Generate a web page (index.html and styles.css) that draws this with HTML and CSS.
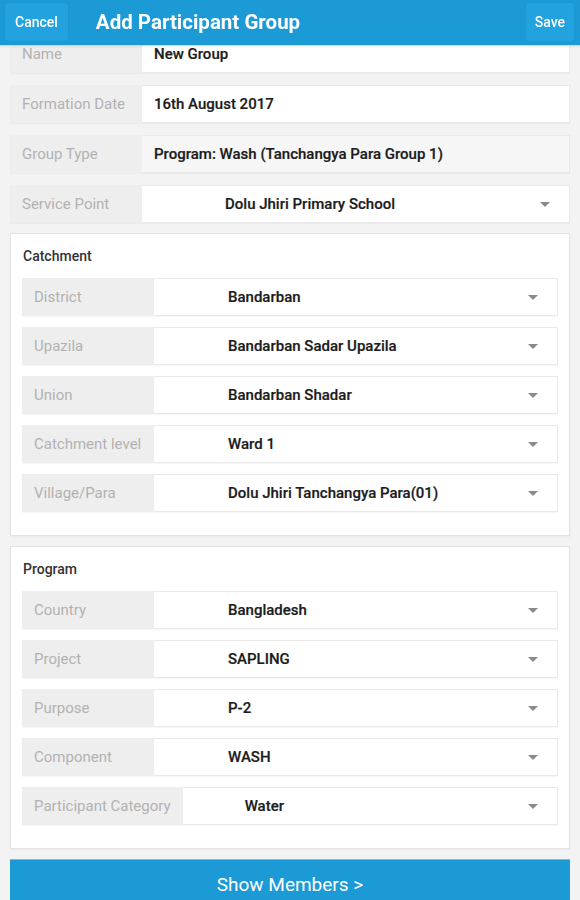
FILE: index.html
```html
<!DOCTYPE html>
<html>
<head>
<meta charset="utf-8">
<link rel="stylesheet" href="styles.css">
</head>
<body>
<header class="topbar">
  <button class="bar-btn">Cancel</button>
  <div class="title">Add Participant Group</div>
  <button class="bar-btn save">Save</button>
</header>
<main class="content">
  <div class="row">
    <div class="label">Name</div>
    <div class="value text">New Group</div>
  </div>
  <div class="row">
    <div class="label">Formation Date</div>
    <div class="value text">16th August 2017</div>
  </div>
  <div class="row">
    <div class="label">Group Type</div>
    <div class="value text disabled">Program: Wash (Tanchangya Para Group 1)</div>
  </div>
  <div class="row last-top">
    <div class="label">Service Point</div>
    <div class="value select sp">Dolu Jhiri Primary School<span class="caret"></span></div>
  </div>

  <section class="card">
    <h2 class="card-title">Catchment</h2>
    <div class="row">
      <div class="label">District</div>
      <div class="value select">Bandarban<span class="caret"></span></div>
    </div>
    <div class="row">
      <div class="label">Upazila</div>
      <div class="value select">Bandarban Sadar Upazila<span class="caret"></span></div>
    </div>
    <div class="row">
      <div class="label">Union</div>
      <div class="value select">Bandarban Shadar<span class="caret"></span></div>
    </div>
    <div class="row">
      <div class="label">Catchment level</div>
      <div class="value select">Ward 1<span class="caret"></span></div>
    </div>
    <div class="row">
      <div class="label">Village/Para</div>
      <div class="value select">Dolu Jhiri Tanchangya Para(01)<span class="caret"></span></div>
    </div>
  </section>

  <section class="card">
    <h2 class="card-title">Program</h2>
    <div class="row">
      <div class="label">Country</div>
      <div class="value select">Bangladesh<span class="caret"></span></div>
    </div>
    <div class="row">
      <div class="label">Project</div>
      <div class="value select">SAPLING<span class="caret"></span></div>
    </div>
    <div class="row">
      <div class="label">Purpose</div>
      <div class="value select">P-2<span class="caret"></span></div>
    </div>
    <div class="row">
      <div class="label">Component</div>
      <div class="value select">WASH<span class="caret"></span></div>
    </div>
    <div class="row">
      <div class="label">Participant Category</div>
      <div class="value select pc">Water<span class="caret"></span></div>
    </div>
  </section>

  <button class="show-btn">Show Members &gt;</button>
</main>
</body>
</html>
```

FILE: styles.css
```css
* { box-sizing: border-box; }

html, body {
  margin: 0;
  padding: 0;
}

body {
  background: #f3f3f3;
  font-family: Roboto, "Liberation Sans", Arial, sans-serif;
  width: 580px;
  height: 900px;
  overflow: hidden;
}

.topbar {
  position: fixed;
  top: 0;
  left: 0;
  right: 0;
  height: 46px;
  background: #1b9ad6;
  display: flex;
  align-items: center;
  padding: 0 6px 0 5px;
  border-bottom: 1px solid #bfe0f2;
  box-shadow: 0 1px 2px rgba(0,0,0,0.08);
  z-index: 2;
}

.bar-btn {
  height: 38px;
  margin-top: -2px;
  border: none;
  border-radius: 3px;
  background: #22a2df;
  color: #fff;
  font-family: Roboto, "Liberation Sans", Arial, sans-serif;
  font-size: 14px;
  font-weight: 500;
  padding: 0 10px;
  box-shadow: 0 0 2px rgba(0,0,0,0.06);
}

.title {
  flex: 1;
  color: #fff;
  font-size: 20.5px;
  font-weight: 700;
  margin-left: 28px;
  margin-top: -2px;
}

.save { padding: 0 9px; }

.content {
  padding: 35px 10px 0 10px;
  display: flex;
  flex-direction: column;
}

.row {
  display: flex;
  height: 38px;
  margin-bottom: 12px;
  border: 1px solid #e9e9e9;
  background: #fff;
  box-shadow: 0 1px 1px rgba(0,0,0,0.03);
}

.row.last-top { margin-bottom: 10px; }

.card .row { margin-bottom: 11px; }

.label {
  min-width: 132px;
  background: #eeeeee;
  color: #b2b2b2;
  font-size: 15px;
  display: flex;
  align-items: center;
  padding: 0 12px 0 12px;
  white-space: nowrap;
  margin: -1px 0 -1px -1px;
}

.value {
  flex: 1;
  display: flex;
  align-items: center;
  color: #1c1c1c;
  font-size: 15px;
  font-weight: 500;
  position: relative;
  white-space: nowrap;
  -webkit-text-stroke: 0.2px #1c1c1c;
}

.value.text { padding-left: 12px; }
.value.disabled { background: #f6f6f6; }

.value.select { padding-left: 74px; }
.value.select.sp { padding-left: 83px; }
.value.select.pc { padding-left: 62px; }

.caret {
  position: absolute;
  right: 19px;
  top: 50%;
  margin-top: -2px;
  width: 0;
  height: 0;
  border-left: 5px solid transparent;
  border-right: 5px solid transparent;
  border-top: 5px solid #8a8a8a;
}

.card {
  background: #fff;
  border: 1px solid #e3e3e3;
  padding: 11px 11px 12px 11px;
  margin-bottom: 10px;
  box-shadow: 0 1px 2px rgba(0,0,0,0.04);
}

.card-title {
  margin: 0 0 11px 1px;
  font-size: 14px;
  font-weight: 500;
  color: #333;
  line-height: 22px;
}

.show-btn {
  height: 52px;
  border: none;
  background: #1b9ad6;
  color: #fff;
  font-family: Roboto, "Liberation Sans", Arial, sans-serif;
  font-size: 19px;
  padding-top: 0;
  padding-bottom: 2px;
  border-top: 1px solid #6cc0ea;
}
```
